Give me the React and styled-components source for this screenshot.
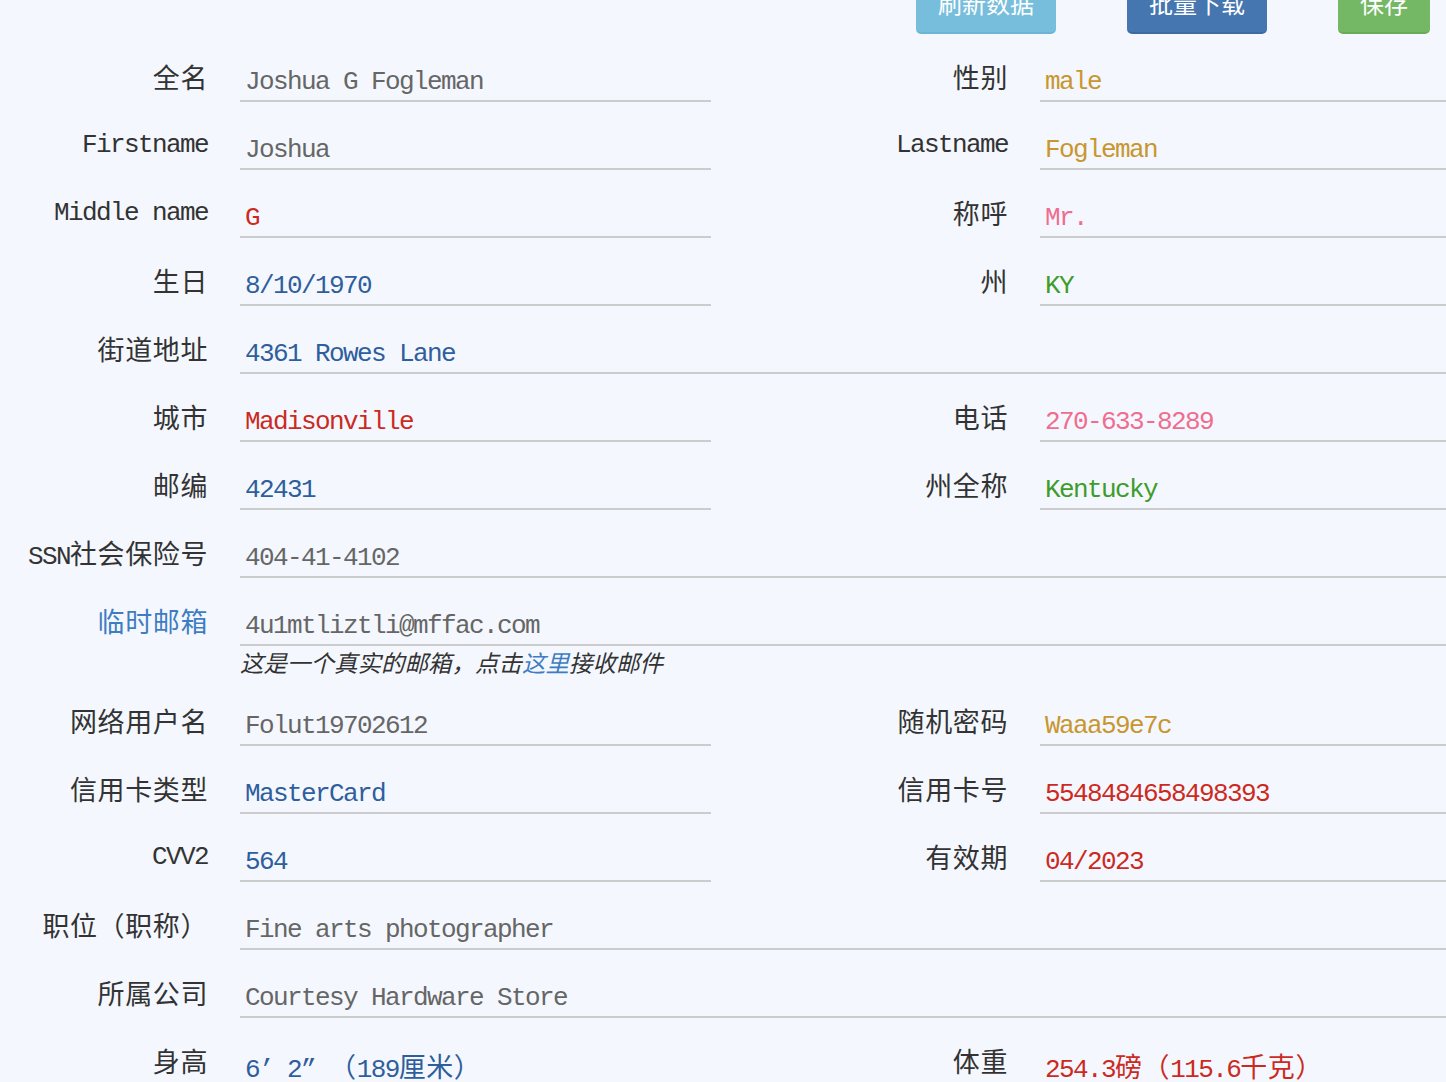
import React from "react";
import styled, { createGlobalStyle } from "styled-components";

const Global = createGlobalStyle`
  html, body { margin: 0; padding: 0; background: #f4f8fe; }
  body { overflow: hidden; }
  #root { width: 1446px; height: 1082px; overflow: hidden; }
`;

const Page = styled.div`
  width: 1446px;
  font-family: "Liberation Mono", "Noto Sans CJK SC", monospace;
  font-size: 26px;
  letter-spacing: -1.6px;
  color: #333;
`;

const Han = styled.span`
  font-family: "Noto Sans CJK SC", sans-serif;
  font-size: 27px;
  letter-spacing: 0.6px;
`;

const Toolbar = styled.div`
  display: flex;
  justify-content: flex-end;
  gap: 71px;
  padding-right: 16px;
  margin-top: -22px;
  height: 56px;
`;

const Button = styled.button`
  height: 56px;
  padding: 0 22px;
  border: none;
  border-bottom: 2px solid ${(p) => p.$edge};
  border-radius: 5px;
  background: ${(p) => p.$bg};
  color: #fff;
  font-family: "Noto Sans CJK SC", sans-serif;
  font-size: 24px;
  letter-spacing: 0;
  line-height: 1;
  padding-bottom: 4px;
`;

const Row = styled.div`
  display: grid;
  grid-template-columns: 711px 1fr;
  column-gap: 89px;
`;

const Field = styled.div`
  display: grid;
  grid-template-columns: 208px 1fr;
  column-gap: 32px;
  grid-column: ${(p) => (p.$full ? "1 / -1" : "auto")};
`;

const Label = styled.div`
  text-align: right;
  padding-top: 25px;
  line-height: 36px;
  white-space: nowrap;
  color: ${(p) => p.$color || "#333"};
`;

const Value = styled.div`
  height: 68px;
  box-sizing: border-box;
  padding: 30px 0 0 5px;
  line-height: 36px;
  border-bottom: 2px solid #cccccc;
  white-space: nowrap;
  color: ${(p) => p.$color};
`;

const Note = styled.div`
  grid-column: 2;
  height: 32px;
  line-height: 32px;
  font-family: "Noto Sans CJK SC", sans-serif;
  font-size: 23.5px;
  font-style: italic;
  letter-spacing: 0;
  color: #333;
`;

const Link = styled.span`
  color: #3f7dc2;
`;

const C = {
  gray: "#666666",
  gold: "#c9962e",
  red: "#cc2a1f",
  pink: "#ef6d8f",
  blue: "#2f5e9d",
  green: "#3f9c2b",
};

const HAN_RE = /([\u3000-\u303f\u3400-\u9fff\uff00-\uffef]+)/;

const T = ({ children }) =>
  String(children)
    .split(HAN_RE)
    .filter(Boolean)
    .map((part, i) =>
      HAN_RE.test(part) ? <Han key={i}>{part}</Han> : <React.Fragment key={i}>{part}</React.Fragment>
    );

const F = ({ label, value, color, full, labelColor, children }) => (
  <Field $full={full}>
    <Label $color={labelColor}>
      <T>{label}</T>
    </Label>
    <Value $color={color}>
      <T>{value}</T>
    </Value>
    {children}
  </Field>
);

export default function App() {
  return (
    <Page>
      <Global />
      <Toolbar>
        <Button $bg="#77bedc" $edge="#6cb4d4">刷新数据</Button>
        <Button $bg="#4576b0" $edge="#3d6aa1">批量下载</Button>
        <Button $bg="#74b865" $edge="#68ab59">保存</Button>
      </Toolbar>
      <Row>
        <F label="全名" value="Joshua G Fogleman" color={C.gray} />
        <F label="性别" value="male" color={C.gold} />
      </Row>
      <Row>
        <F label="Firstname" value="Joshua" color={C.gray} />
        <F label="Lastname" value="Fogleman" color={C.gold} />
      </Row>
      <Row>
        <F label="Middle name" value="G" color={C.red} />
        <F label="称呼" value="Mr." color={C.pink} />
      </Row>
      <Row>
        <F label="生日" value="8/10/1970" color={C.blue} />
        <F label="州" value="KY" color={C.green} />
      </Row>
      <Row>
        <F full label="街道地址" value="4361 Rowes Lane" color={C.blue} />
      </Row>
      <Row>
        <F label="城市" value="Madisonville" color={C.red} />
        <F label="电话" value="270-633-8289" color={C.pink} />
      </Row>
      <Row>
        <F label="邮编" value="42431" color={C.blue} />
        <F label="州全称" value="Kentucky" color={C.green} />
      </Row>
      <Row>
        <F full label="SSN社会保险号" value="404-41-4102" color={C.gray} />
      </Row>
      <Row>
        <F full label="临时邮箱" labelColor="#3f7dc2" value="4u1mtliztli@mffac.com" color={C.gray}>
          <Note>
            这是一个真实的邮箱，点击<Link>这里</Link>接收邮件
          </Note>
        </F>
      </Row>
      <Row>
        <F label="网络用户名" value="Folut19702612" color={C.gray} />
        <F label="随机密码" value="Waaa59e7c" color={C.gold} />
      </Row>
      <Row>
        <F label="信用卡类型" value="MasterCard" color={C.blue} />
        <F label="信用卡号" value="5548484658498393" color={C.red} />
      </Row>
      <Row>
        <F label="CVV2" value="564" color={C.blue} />
        <F label="有效期" value="04/2023" color={C.red} />
      </Row>
      <Row>
        <F full label="职位（职称）" value="Fine arts photographer" color={C.gray} />
      </Row>
      <Row>
        <F full label="所属公司" value="Courtesy Hardware Store" color={C.gray} />
      </Row>
      <Row>
        <F label="身高" value="6’ 2” （189厘米）" color={C.blue} />
        <F label="体重" value="254.3磅（115.6千克）" color={C.red} />
      </Row>
    </Page>
  );
}
